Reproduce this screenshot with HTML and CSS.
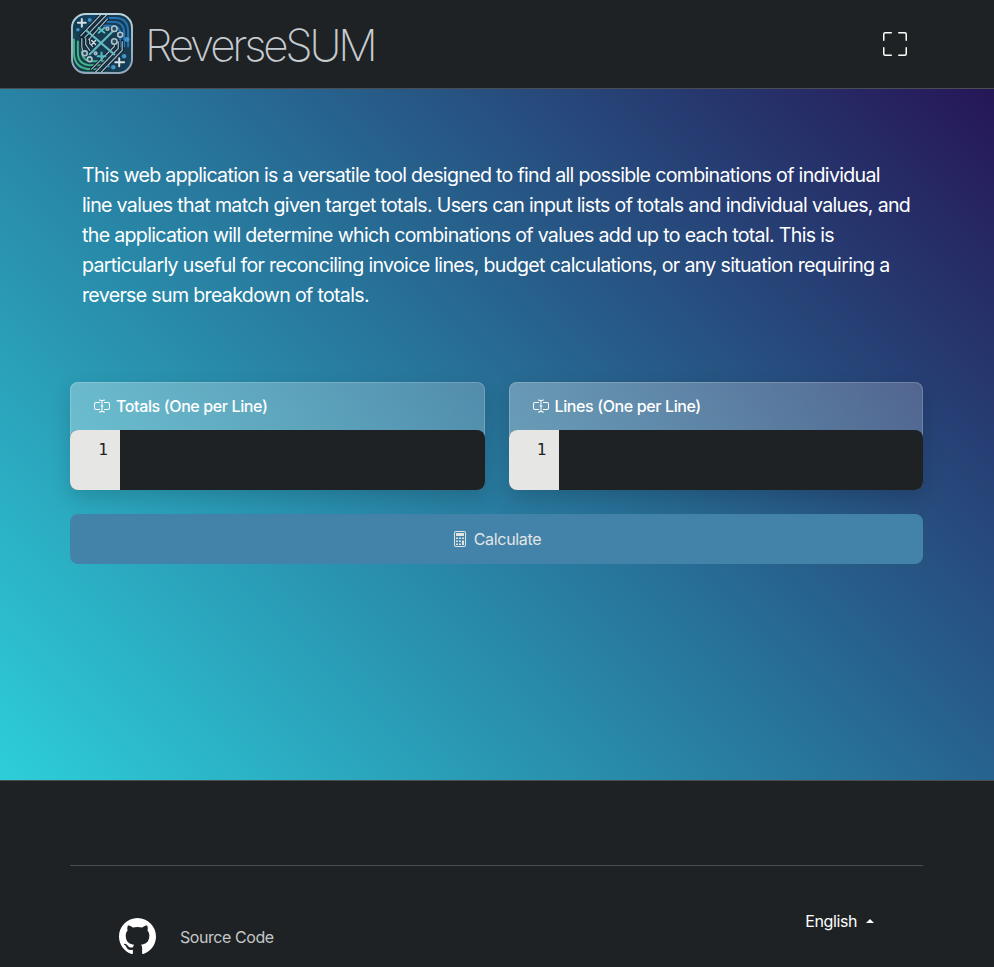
FILE: index.html
```html
<!DOCTYPE html>
<html lang="en">
<head>
<meta charset="utf-8">
<title>ReverseSUM</title>
<link rel="stylesheet" href="styles.css">
</head>
<body>
<header class="topbar">
  <div class="container topbar-inner">
    <a class="brand">
      <svg class="logo" viewBox="0 0 64 64" fill="none" stroke-linecap="round">
        <defs>
          <linearGradient id="lg" x1="0" y1="1" x2="1" y2="0"><stop offset="0" stop-color="#2d8763"/><stop offset=".4" stop-color="#123b50"/><stop offset="1" stop-color="#174d81"/></linearGradient>
          <linearGradient id="rim" x1="0" y1="0" x2="0" y2="1"><stop offset="0" stop-color="#b9d3dc"/><stop offset="1" stop-color="#92a7bb"/></linearGradient>
          <clipPath id="tile"><rect x="2" y="1" width="61" height="60" rx="14"/></clipPath>
        </defs>
        <rect x="2" y="1" width="61" height="60" rx="14" fill="url(#lg)"/>
        <g clip-path="url(#tile)">
          <path d="M14 18 32 1H64V43L50 59H3V27Z" fill="#173c51"/>
          <path d="M34 5H46Q59 5 59 19V34M34 9H44Q55 9 55 20V34M34 13H42Q51 13 51 21V34" stroke="#2474b4" stroke-width="2"/>
          <path d="M4 27V40Q4 57 22 57H30M8 29V40Q8 53 22 53H32M12 30V38Q12 49 23 49H36" stroke="#42b585" stroke-width="2"/>
          <path d="M11 23 33 0M15 25 38 1M19 27 38 6M12 26V34Q12 38 16 41M16 26V32L20 38M20 27V31L23 34M53 29V38L29 63M49 29V36L25 61M45 29V34L22 57" stroke="#0b1c2a" stroke-width="3"/>
          <path d="M11 23 33 0M15 25 38 1M19 27 38 6M12 26V34Q12 38 16 41M16 26V32L20 38M20 27V31L23 34M53 29V38L29 63M49 29V36L25 61M45 29V34L22 57" stroke="#a9bac3" stroke-width="1.3"/>
          <path d="m17 18 28 24M43 19 20 42" stroke="#65b8be" stroke-width="2.2"/>
          <path d="M8 10h8M12 6v8M46 50h9M50 46v8" stroke="#d2e0e3" stroke-width="2"/>
          <path d="M28 44h8M32 40v8M29 15l6 5M35 15l-6 5" stroke="#53bdc4" stroke-width="2"/>
          <path d="m22 28 4 4m0-4-4 4" stroke="#d2e0e3" stroke-width="1.3"/>
          <g fill="#294b5c" stroke="#adc2cb" stroke-width="1.6"><circle cx="45" cy="16" r="2.8"/><circle cx="51" cy="22" r="2.5"/><circle cx="38" cy="16" r="1.5"/><circle cx="45" cy="29" r="2.8"/><circle cx="15" cy="41" r="2.5"/><circle cx="20" cy="47" r="2.4"/><circle cx="26" cy="41" r="1.3"/></g>
          <g fill="#4295c8"><circle cx="58" cy="27" r="2.5"/><circle cx="55" cy="44" r="2.3"/><circle cx="44" cy="55" r="2.3"/><circle cx="8" cy="17" r="1.8"/><circle cx="20" cy="7" r="2"/><circle cx="39" cy="54" r="1.2"/></g>
        </g>
        <rect x="2" y="1" width="61" height="60" rx="14" stroke="url(#rim)" stroke-width="1.9"/>
      </svg>
      <span class="brand-name">ReverseSUM</span>
    </a>
    <svg class="fullscreen" viewBox="0 0 16 16" fill="currentColor"><path d="M1.5 1a.5.5 0 0 0-.5.5v4a.5.5 0 0 1-1 0v-4A1.5 1.5 0 0 1 1.5 0h4a.5.5 0 0 1 0 1zM10 .5a.5.5 0 0 1 .5-.5h4A1.5 1.5 0 0 1 16 1.5v4a.5.5 0 0 1-1 0v-4a.5.5 0 0 0-.5-.5h-4a.5.5 0 0 1-.5-.5M.5 10a.5.5 0 0 1 .5.5v4a.5.5 0 0 0 .5.5h4a.5.5 0 0 1 0 1h-4A1.5 1.5 0 0 1 0 14.500v-4a.5.5 0 0 1 .5-.5m15 0a.5.5 0 0 1 .5.5v4a1.5 1.5 0 0 1-1.500 1.500h-4a.5.5 0 0 1 0-1h4a.5.5 0 0 0 .5-.5v-4a.5.5 0 0 1 .5-.5"/></svg>
  </div>
</header>
<main class="main">
  <div class="container">
    <p class="lead">This web application is a versatile tool designed to find all possible combinations of individual<br>line values that match given target totals. Users can input lists of totals and individual values, and<br>the application will determine which combinations of values add up to each total. This is<br>particularly useful for reconciling invoice lines, budget calculations, or any situation requiring a<br>reverse sum breakdown of totals.</p>
    <div class="cards">
      <section class="card">
        <h2 class="card-header"><svg class="icon" viewBox="0 0 16 16" fill="currentColor"><path d="M5 2a.5.5 0 0 1 .5-.5c.862 0 1.573.287 2.060.566.174.099.321.198.440.286.119-.088.266-.187.440-.286A4.165 4.165 0 0 1 10.500 1.500a.5.5 0 0 1 0 1c-.638 0-1.177.213-1.564.434a3.500 3.500 0 0 0-.436.294V7.500H9a.5.5 0 0 1 0 1h-.5v4.272c.1.080.248.187.436.294.387.221.926.434 1.564.434a.5.5 0 0 1 0 1 4.165 4.165 0 0 1-2.060-.566A5 5 0 0 1 8 13.648a5 5 0 0 1-.440.286 4.165 4.165 0 0 1-2.060.566.5.5 0 0 1 0-1c.638 0 1.177-.213 1.564-.434.188-.107.335-.214.436-.294V8.500H7a.5.5 0 0 1 0-1h.5V3.228a3.500 3.500 0 0 0-.436-.294A3.166 3.166 0 0 0 5.500 2.500.5.5 0 0 1 5 2"/><path d="M10 5h4a1 1 0 0 1 1 1v4a1 1 0 0 1-1 1h-4v1h4a2 2 0 0 0 2-2V6a2 2 0 0 0-2-2h-4zM6 5V4H2a2 2 0 0 0-2 2v4a2 2 0 0 0 2 2h4v-1H2a1 1 0 0 1-1-1V6a1 1 0 0 1 1-1z"/></svg><span>Totals (One per Line)</span></h2>
        <div class="editor"><div class="gutter">1</div><div class="code" contenteditable="true"></div></div>
      </section>
      <section class="card">
        <h2 class="card-header"><svg class="icon" viewBox="0 0 16 16" fill="currentColor"><path d="M5 2a.5.5 0 0 1 .5-.5c.862 0 1.573.287 2.060.566.174.099.321.198.440.286.119-.088.266-.187.440-.286A4.165 4.165 0 0 1 10.500 1.500a.5.5 0 0 1 0 1c-.638 0-1.177.213-1.564.434a3.500 3.500 0 0 0-.436.294V7.500H9a.5.5 0 0 1 0 1h-.5v4.272c.1.080.248.187.436.294.387.221.926.434 1.564.434a.5.5 0 0 1 0 1 4.165 4.165 0 0 1-2.060-.566A5 5 0 0 1 8 13.648a5 5 0 0 1-.440.286 4.165 4.165 0 0 1-2.060.566.5.5 0 0 1 0-1c.638 0 1.177-.213 1.564-.434.188-.107.335-.214.436-.294V8.500H7a.5.5 0 0 1 0-1h.5V3.228a3.500 3.500 0 0 0-.436-.294A3.166 3.166 0 0 0 5.500 2.500.5.5 0 0 1 5 2"/><path d="M10 5h4a1 1 0 0 1 1 1v4a1 1 0 0 1-1 1h-4v1h4a2 2 0 0 0 2-2V6a2 2 0 0 0-2-2h-4zM6 5V4H2a2 2 0 0 0-2 2v4a2 2 0 0 0 2 2h4v-1H2a1 1 0 0 1-1-1V6a1 1 0 0 1 1-1z"/></svg><span>Lines (One per Line)</span></h2>
        <div class="editor"><div class="gutter">1</div><div class="code" contenteditable="true"></div></div>
      </section>
    </div>
    <button class="calculate"><svg class="icon" viewBox="0 0 16 16" fill="currentColor"><path d="M12 1a1 1 0 0 1 1 1v12a1 1 0 0 1-1 1H4a1 1 0 0 1-1-1V2a1 1 0 0 1 1-1zM4 0a2 2 0 0 0-2 2v12a2 2 0 0 0 2 2h8a2 2 0 0 0 2-2V2a2 2 0 0 0-2-2z"/><path d="M4 2.500a.5.5 0 0 1 .5-.5h7a.5.5 0 0 1 .5.5v2a.5.5 0 0 1-.5.5h-7a.5.5 0 0 1-.5-.5zM4 6.500h2v1.500H4zM7 6.500h2v1.500H7zM10 6.500h2v1.500h-2zM4 9.500h2V11H4zM7 9.500h2V11H7zM10 9.500h2V14h-2zM4 12.500h2V14H4zM7 12.500h2V14H7z"/></svg><span>Calculate</span></button>
  </div>
</main>
<footer class="footer">
  <div class="container">
    <div class="footer-row">
      <a class="source"><svg class="github" viewBox="0 0 16 16" fill="currentColor"><path d="M8 0C3.580 0 0 3.580 0 8c0 3.540 2.290 6.530 5.470 7.590.4.070.55-.17.55-.38 0-.19-.01-.82-.01-1.490-2.010.37-2.530-.49-2.690-.94-.09-.23-.48-.94-.82-1.130-.28-.15-.68-.52-.01-.53.63-.01 1.080.58 1.230.82.72 1.210 1.870.87 2.330.66.070-.52.28-.87.51-1.070-1.780-.2-3.640-.89-3.640-3.950 0-.87.31-1.590.82-2.150-.08-.2-.36-1.020.080-2.120 0 0 .67-.21 2.200.82.64-.18 1.320-.27 2-.27s1.360.09 2 .27c1.530-1.040 2.200-.82 2.200-.82.44 1.100.16 1.920.080 2.120.51.56.82 1.270.82 2.150 0 3.070-1.870 3.750-3.650 3.950.29.25.54.73.54 1.480 0 1.070-.01 1.930-.01 2.200 0 .21.15.46.55.38A8.010 8.010 0 0 0 16 8c0-4.420-3.580-8-8-8"/></svg><span>Source Code</span></a>
      <button class="language"><span>English</span><span class="caret"></span></button>
    </div>
  </div>
</footer>
</body>
</html>
```

FILE: styles.css
```css
* { box-sizing: border-box; }
body {
  margin: 0;
  height: 967px;
  overflow: hidden;
  display: flex;
  flex-direction: column;
  background: #1e2225;
  color: #fff;
  font-family: Inter, sans-serif;
  font-size: 16px;
}
button { font: inherit; color: inherit; border: 0; background: none; padding: 0; }
.container { width: 853px; margin: 0 auto 0 70px; }
.topbar { height: 89px; flex: none; border-bottom: 1px solid #4b4e50; }
.topbar-inner { display: flex; justify-content: space-between; align-items: center; height: 88px; padding-right: 16px; }
.brand { display: flex; align-items: center; }
.logo { width: 63px; height: 63px; }
.brand-name {
  margin: 2px 0 0 12px;
  font-size: 44px;
  font-weight: 250;
  line-height: 60px;
  letter-spacing: -3.200px;
  color: #c6cbcf;
}
.fullscreen { width: 24px; height: 24px; }
.main {
  height: 691px;
  flex: none;
  padding-top: 71px;
  background: linear-gradient(45deg, #2dced9, #276c94 54%, #261657);
}
.lead {
  margin: 0 0 72px;
  padding-left: 12px;
  font-size: 19.600px;
  line-height: 30px;
  letter-spacing: -0.680px;
  white-space: nowrap;
}
.cards { display: grid; grid-template-columns: 1fr 1fr; column-gap: 24px; }
.card {
  height: 108px;
  border-radius: 8px;
  background: linear-gradient(90deg, rgba(255,255,255,.3), rgba(255,255,255,.2));
  box-shadow: 0 8px 20px rgba(0,0,0,.15), inset 0 0 0 1px rgba(255,255,255,.18);
}
.card-header {
  display: flex;
  align-items: center;
  height: 48px;
  margin: 0;
  padding-left: 24px;
  font-size: 16px;
  font-weight: 500;
  letter-spacing: -0.380px;
}
.icon { width: 16px; height: 16px; flex: none; margin-right: 6px; }
.editor {
  display: flex;
  height: 60px;
  border-radius: 8px;
  overflow: hidden;
  background: #1e2225;
}
.gutter {
  width: 50px;
  padding: 8px 12px 0 0;
  background: #e6e6e4;
  color: #1e2225;
  text-align: right;
  font-family: "DejaVu Sans Mono", monospace;
  font-size: 16px;
  line-height: 24px;
}
.code { flex: 1; outline: 0; }
.calculate {
  display: flex;
  align-items: center;
  justify-content: center;
  width: 100%;
  height: 50px;
  margin-top: 24px;
  border-radius: 8px;
  background: #4483a9;
  color: #e2e5e5;
  letter-spacing: -0.300px;
}
.footer { height: 187px; border-top: 1px solid #4b4e50; padding-top: 84px; }
.footer-row {
  display: flex;
  justify-content: space-between;
  padding: 44px 49px 0;
  border-top: 1px solid #4b4e50;
}
.source { display: flex; align-items: center; height: 54px; color: #c6c7c8; letter-spacing: -0.430px; }
.github { width: 37px; height: 37px; margin: -2px 24px 0 0; color: #fff; }
.language { display: flex; align-items: center; height: 22px; letter-spacing: -0.400px; }
.caret { margin-left: 9px; border: 4px solid transparent; border-top: 0; border-bottom-color: #fff; }
```
